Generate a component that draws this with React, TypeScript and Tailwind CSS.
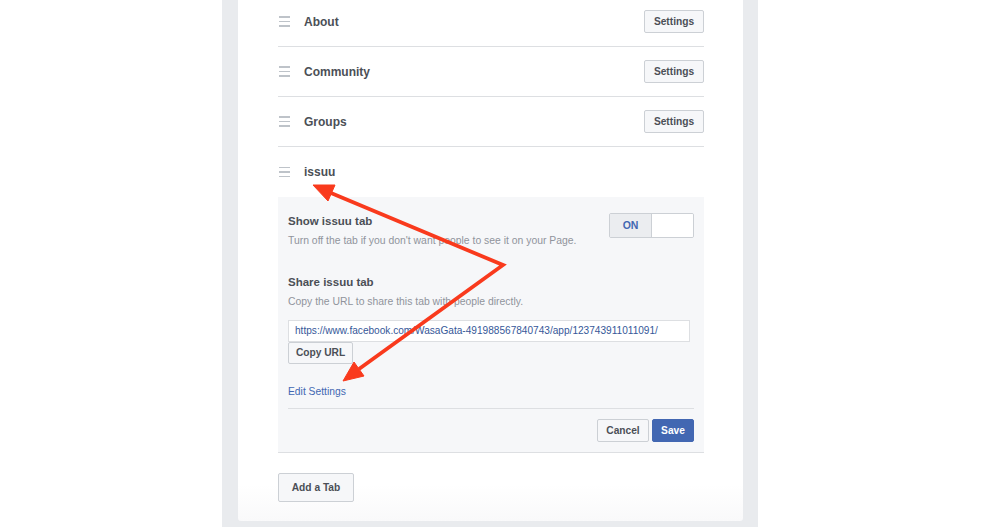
const font = { fontFamily: '"Liberation Sans", Helvetica, Arial, sans-serif' };

const tabs = ["About", "Community", "Groups"];

function Handle() {
  return (
    <div className="ml-px flex w-[11px] flex-col gap-[3px]">
      <span className="h-[1.5px] bg-[#bec3c9]" />
      <span className="h-[1.5px] bg-[#bec3c9]" />
      <span className="h-[1.5px] bg-[#bec3c9]" />
    </div>
  );
}

function GrayButton({ label, className = "" }: { label: string; className?: string }) {
  return (
    <button
      className={`flex items-center justify-center rounded-[2px] border border-[#ccd0d5] bg-[#f6f7f9] text-[10.2px] font-bold text-[#4b4f56] ${className}`}
    >
      {label}
    </button>
  );
}

function Arrows() {
  return (
    <svg className="pointer-events-none absolute left-0 top-0" width="1000" height="527">
      <g fill="#f93a1d" stroke="#f93a1d" strokeLinejoin="miter">
        <polyline points="331,193 503,265 359,369" fill="none" strokeWidth="3.8" />
        <polygon points="313,185 335,185 328,201" strokeWidth="1" />
        <polygon points="343,381 354,362 364,376" strokeWidth="1" />
      </g>
    </svg>
  );
}

export default function App() {
  return (
    <div className="relative h-[527px] overflow-hidden bg-white pl-[222px]" style={font}>
      <div className="h-[527px] w-[536px] bg-[#e9ebee] pl-4 pr-[15px]">
        <div className="h-[521px] overflow-hidden rounded-b-[3px] bg-[linear-gradient(to_bottom,#fff_93%,#f9f9fa)] pl-[40px] pr-[39px]">
          <div className="-mt-[3px]">
            {tabs.map((t) => (
              <div key={t} className="flex h-[50px] items-center border-b border-[#dddfe2]">
                <Handle />
                <span className="ml-[14px] text-[12px] font-bold text-[#4b4f56]">{t}</span>
                <GrayButton label="Settings" className="ml-auto h-[23px] w-[60px]" />
              </div>
            ))}
            <div className="flex h-[50px] items-center">
              <Handle />
              <span className="ml-[14px] text-[12px] font-bold text-[#4b4f56]">issuu</span>
            </div>

            <div className="border-b border-[#dddfe2] bg-[#f6f7f9] px-[10px] pb-[10px] pt-4">
              <div className="flex items-start justify-between">
                <div>
                  <div className="text-[11.5px] font-bold leading-4 text-[#4b4f56]">Show issuu tab</div>
                  <div className="mt-[5px] text-[10.4px] leading-[14px] text-[#90949c]">
                    Turn off the tab if you don't want people to see it on your Page.
                  </div>
                </div>
                <div className="flex h-[25px] w-[85px] overflow-hidden rounded-[2px] border border-[#ccd0d5]">
                  <div className="flex w-[42px] items-center justify-center border-r border-[#ccd0d5] bg-[#ebedf0] text-[10.5px] font-bold text-[#4267b2]">
                    ON
                  </div>
                  <div className="flex-1 bg-white" />
                </div>
              </div>

              <div className="mt-[26px] text-[11.5px] font-bold leading-4 text-[#4b4f56]">Share issuu tab</div>
              <div className="mt-[5px] text-[10.4px] leading-[14px] text-[#90949c]">
                Copy the URL to share this tab with people directly.
              </div>
              <div className="mt-[11px] flex h-[22px] w-[402px] items-center border border-[#dddfe2] bg-white px-[6px] text-[10.1px] text-[#365899]">
                https://www.facebook.com/WasaGata-491988567840743/app/123743911011091/
              </div>
              <GrayButton label="Copy URL" className="h-[22px] w-[65px]" />

              <div className="mt-[21px] text-[10.3px] leading-[14px] text-[#4267b2]">Edit Settings</div>
              <div className="mt-[9px] border-t border-[#dddfe2]" />
              <div className="mt-[10px] flex justify-end gap-[3px]">
                <GrayButton label="Cancel" className="h-[23px] w-[52px]" />
                <button className="flex h-[23px] w-[42px] items-center justify-center rounded-[2px] border border-[#4267b2] bg-[#4267b2] text-[10.2px] font-bold text-white">
                  Save
                </button>
              </div>
            </div>

            <GrayButton label="Add a Tab" className="mt-5 h-[29px] w-[76px]" />
          </div>
        </div>
      </div>
      <Arrows />
    </div>
  );
}
